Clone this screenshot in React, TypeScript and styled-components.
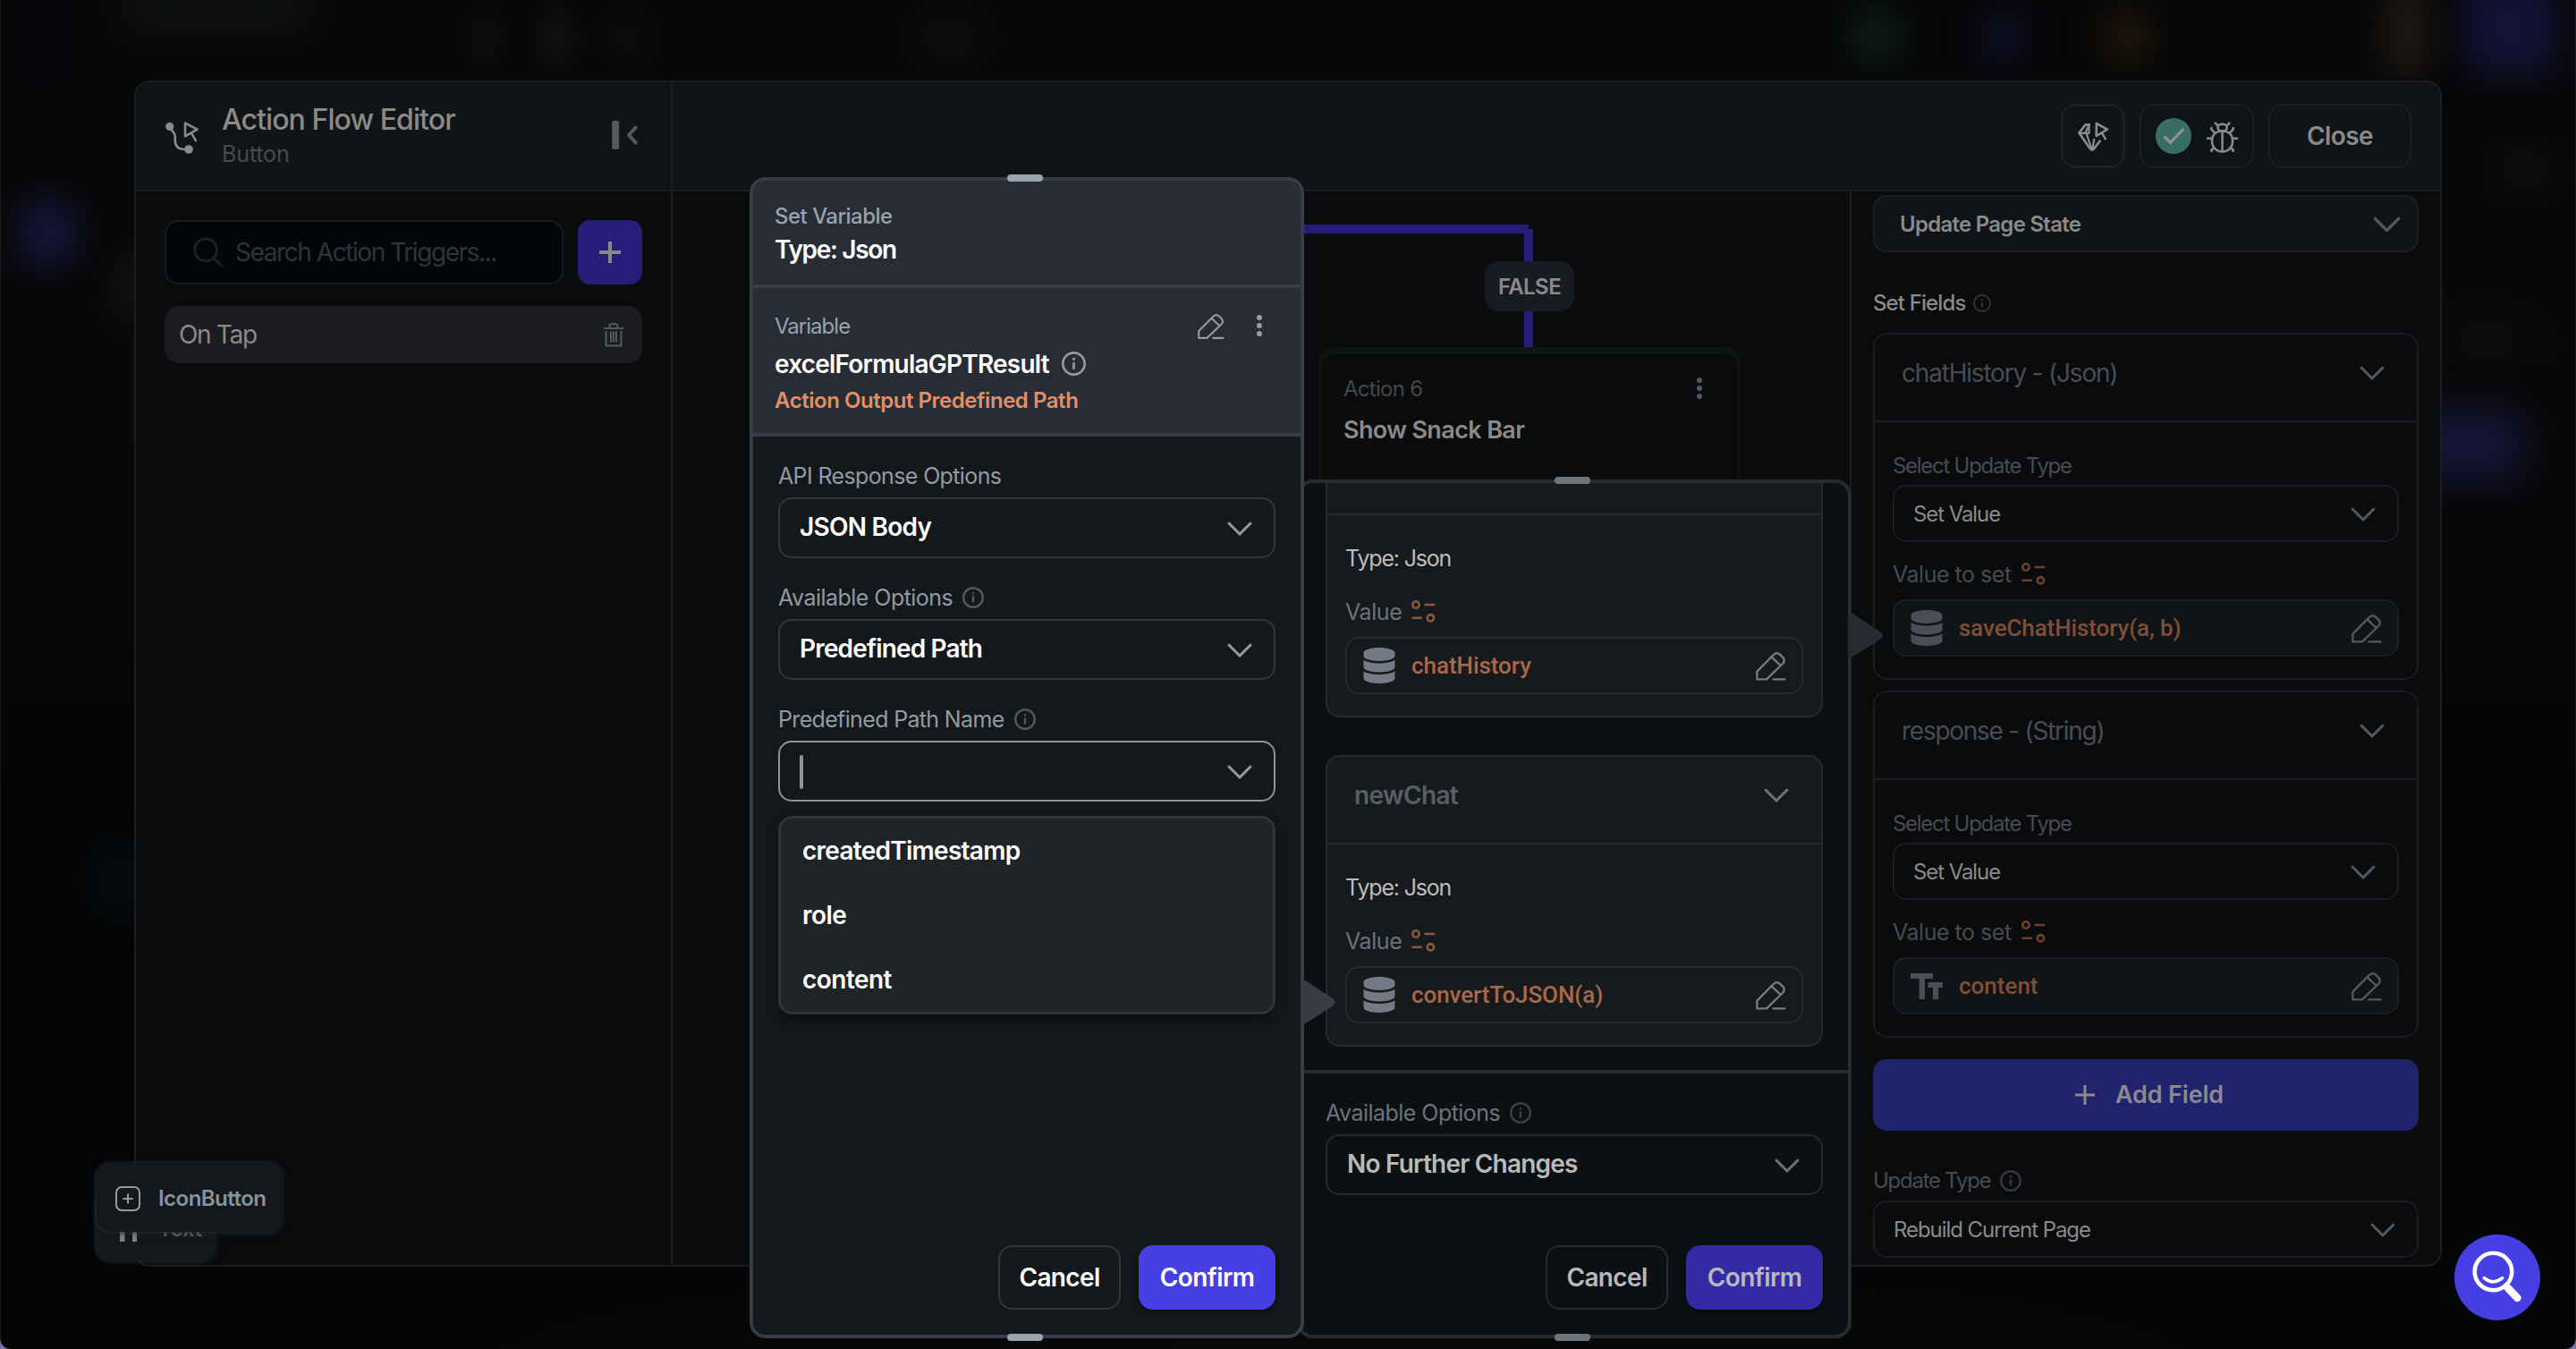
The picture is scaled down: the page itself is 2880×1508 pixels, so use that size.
import React from 'react';
import styled, { createGlobalStyle, css } from 'styled-components';
import { FaDatabase } from 'react-icons/fa';

const c = {
  line: '#1a1d22',
  shell: '#0a0b0d',
  bar: '#101416',
  dimText: '#8a8a8a',
  dimLabel: '#474c52',
  dimIcon: '#54595e',
  border1: '#373c46',
  border2: '#262a31',
  label1: '#919ba5',
  label2: '#6b737b',
};

const TIGHTEN = 0.13;

const GlobalStyle = createGlobalStyle`
  * { box-sizing: border-box; }
  body { margin: 0; background: #7d70a8; font-family: Inter, "Liberation Sans", sans-serif; }
  svg { display: block; flex: none; overflow: visible; }
`;

const Page = styled.main`
  position: relative;
  width: 2880px;
  height: 1508px;
  padding: 90px 149px 92px;
  overflow: hidden;
  border-radius: 0 0 12px 12px;
  border: solid #1b1d1d;
  border-width: 0 1px;
  background:
    radial-gradient(ellipse 60px 90px at 45px 40px, #08081499, transparent),
    radial-gradient(ellipse 34px 45px at 540px 42px, #0d0f0f, transparent),
    radial-gradient(ellipse 36px 50px at 620px 42px, #101212, transparent),
    radial-gradient(ellipse 50px 45px at 700px 42px, #0b0c0c, transparent),
    radial-gradient(ellipse 50px 60px at 150px 320px, #101111, transparent),
    radial-gradient(ellipse 70px 55px at 1060px 42px, #0c0d0d, transparent),
    radial-gradient(ellipse 60px 50px at 2822px 190px, #0c0e0e, transparent),
    radial-gradient(ellipse 90px 60px at 2780px 380px, #0b0c0d, transparent),
    radial-gradient(ellipse 1200px 110px at 1500px 1508px, #080a08, transparent),
    linear-gradient(180deg, #060707 0%, #070808 30%, #040506 62%, #040506 100%);
`;

const Glow = styled.i<{ $x: number; $y: number; $w: number; $h: number; $c: string; $b?: number }>`
  position: absolute;
  left: ${p => p.$x}px;
  top: ${p => p.$y}px;
  width: ${p => p.$w}px;
  height: ${p => p.$h}px;
  background: ${p => p.$c};
  filter: blur(${p => p.$b ?? 20}px);
`;

type TextProps = { $s: number; $w?: number; $c: string; $ls?: number; $lh?: number; $mono?: boolean };
const Text = styled.span<TextProps>`
  font-size: ${p => p.$s}px;
  font-weight: ${p => p.$w ?? 400};
  color: ${p => p.$c};
  letter-spacing: ${p => (p.$mono ? p.$ls ?? 0 : (p.$ls ?? 0) - TIGHTEN)}px;
  line-height: ${p => p.$lh ?? 32}px;
  white-space: nowrap;
  ${p => p.$mono && css`font-family: Roboto, "Liberation Sans", sans-serif;`}
`;

/* ---------- icons ---------- */
const Chevron = ({ color, w = 28 }: { color: string; w?: number }) => (
  <svg width={w} height={(w * 16) / 28} viewBox="0 0 28 16" fill="none" stroke={color} strokeWidth="3">
    <path d="M1.2 1.2 L14 14 L26.8 1.2" />
  </svg>
);
const Info = ({ color, size = 24, sw = 2.4 }: { color: string; size?: number; sw?: number }) => (
  <svg width={size} height={size} viewBox="0 0 24 24" fill="none" stroke={color} strokeWidth={sw}>
    <circle cx="12" cy="12" r="10.8" />
    <path d="M12 10.6 V17.6 M12 6.2 V8.6" />
  </svg>
);
const Pencil = ({ color, w = 34 }: { color: string; w?: number }) => (
  <svg width={w} height={(w * 32) / 34} viewBox="0 0 34 32" fill="none" stroke={color} strokeWidth="2.4" strokeLinejoin="round" strokeLinecap="round">
    <path d="M1.4 30.4 V21.6 L19.8 3 Q23.6 -0.6 27.2 2.8 L30.2 5.8 Q33.4 9.4 30 13 L12 30.4 Z" />
    <path d="M17.6 5.4 L27.8 15 M19.6 30.4 H32.4" />
  </svg>
);
const Toggle = ({ color }: { color: string }) => (
  <svg width="27" height="25" viewBox="0 0 27 25" fill="none" stroke={color} strokeWidth="2.6">
    <circle cx="5" cy="5" r="3.7" />
    <path d="M14.5 5 H26.2 M0.4 19.8 H11.8" />
    <circle cx="21.4" cy="19.8" r="3.7" />
  </svg>
);
const Dots = ({ color }: { color: string }) => (
  <svg width="6" height="24" viewBox="0 0 6 24" fill={color}>
    <circle cx="3" cy="3" r="3" /><circle cx="3" cy="12" r="3" /><circle cx="3" cy="21" r="3" />
  </svg>
);
const FlowIcon = () => (
  <svg width="37" height="37" viewBox="0 0 37 37" fill="none" stroke="#8a8a8a" strokeWidth="2.6">
    <circle cx="4.7" cy="7.4" r="4.6" fill="#8a8a8a" stroke="none" />
    <circle cx="26" cy="33" r="4.8" fill="#8a8a8a" stroke="none" />
    <path d="M6 10 C8.5 14 10.8 14.5 10.8 19 V23 Q10.8 33 22 33" />
    <path d="M22 3.6 L35.6 10.6 L22 18.4 Z M28.8 14.4 L34.4 24.2" strokeLinejoin="round" />
  </svg>
);
const CollapseIcon = () => (
  <svg width="29" height="32" viewBox="0 0 29 32" fill="none" stroke="#54585c">
    <rect x="0.2" y="-1" width="8" height="32" rx="2" fill="#54585c" stroke="none" />
    <path d="M26.6 6.6 L19 15 L26.6 23.4" strokeWidth="4" strokeLinecap="round" strokeLinejoin="round" />
  </svg>
);
const SearchIcon = () => (
  <svg width="34" height="34" viewBox="0 0 34 34" fill="none" stroke="#1c2023" strokeWidth="3" strokeLinecap="round">
    <circle cx="14" cy="14.4" r="12.4" /><path d="M23.4 24 L32 32" />
  </svg>
);
const Plus = ({ size, color, sw = 3 }: { size: number; color: string; sw?: number }) => (
  <svg width={size} height={size} viewBox="0 0 24 24" stroke={color} strokeWidth={sw}>
    <path d="M12 0 V24 M0 12 H24" />
  </svg>
);
const Trash = () => (
  <svg width="22" height="27" viewBox="0 0 22 27" fill="none" stroke="#54595e" strokeWidth="2">
    <path d="M0 6 H22 M6.6 6 V3 Q6.6 1.2 8.4 1.2 H13.6 Q15.4 1.2 15.4 3 V6" />
    <path d="M2.6 9 V25.6 H19.4 V9 M8 9.6 V21.6 M11 9.6 V21.6 M14 9.6 V21.6" />
  </svg>
);
const GemIcon = () => (
  <svg width="34" height="33" viewBox="0 0 34 33" fill="none" stroke="#8a8a8a" strokeWidth="2.6" strokeLinejoin="round">
    <path d="M14 3.4 H8.6 L1.4 12.6 L14 30.4 Q16 32.6 18 30.4 L25.4 20.8" />
    <path d="M1.4 12.8 H13.4 M12.6 3.4 V12.8 M12.6 3.4 L8.4 12.8 M9.6 13 L15.6 31 M18.4 19 L16.4 31" strokeWidth="2.2" />
    <path d="M20.8 2 L33 8.6 L20.8 15.8 Z M26.8 12.4 L31.4 20.2" />
  </svg>
);
const CheckBadge = () => (
  <svg width="40" height="40" viewBox="0 0 40 40" fill="none">
    <circle cx="20" cy="20" r="20" fill="#396e67" />
    <path d="M9.6 20.4 L16.4 27.4 L31.4 12" stroke="#8f9290" strokeWidth="3.2" />
  </svg>
);
const Bug = () => (
  <svg width="35" height="35" viewBox="0 -1 35 35" fill="none" stroke="#8a8a8a" strokeWidth="2.5">
    <ellipse cx="17.6" cy="6.6" rx="5.2" ry="3.9" />
    <path d="M17.6 10.6 C9.6 10.6 6 15.4 6 21.6 C6 28.4 11 33.6 17.6 33.6 C24.2 33.6 29.2 28.4 29.2 21.6 C29.2 15.4 25.6 10.6 17.6 10.6 Z M17.6 11 V33.6" />
    <path d="M10 0.4 V2.2 L13 4.6 M25.2 0.4 V2.2 L22.2 4.6 M0 18.8 H6 M29.2 18.8 H35.2 M5.4 6 V8.4 L9 12.4 M29.8 6 V8.4 L26.2 12.4 M5.6 34 V31.4 L8.6 29 M29.6 34 V31.4 L26.6 29" />
  </svg>
);
const TtIcon = () => (
  <svg width="36" height="29" viewBox="0 0 36 29" fill="#4a4e58">
    <path d="M0 0 H25 V6 H16 V29 H9.6 V6 H0 Z M19.6 10 H36 V16 H31.2 V29 H25 V16 H19.6 Z" />
  </svg>
);

/* ---------- shared controls ---------- */
const Select = styled.div<{ $h: number; $bc: string; $pl: number; $pr: number; $bg?: string }>`
  display: flex;
  align-items: center;
  justify-content: space-between;
  height: ${p => p.$h}px;
  padding: 1px ${p => p.$pr}px 0 ${p => p.$pl}px;
  border: 2px solid ${p => p.$bc};
  border-radius: 15px;
  background: ${p => p.$bg ?? 'transparent'};
`;
const SelectValue = styled.div`
  display: flex;
  padding-bottom: 3px;
`;
const LabelRow = styled.div<{ $gap: number; $mt?: number; $mb?: number }>`
  display: flex;
  align-items: center;
  gap: ${p => p.$gap}px;
  height: 32px;
  padding-top: 1px;
  margin: ${p => p.$mt ?? 0}px 0 ${p => p.$mb ?? 0}px;
`;
const ValueField = styled.div<{ $bc: string; $bg?: string }>`
  display: flex;
  align-items: center;
  height: 64px;
  padding: 0 17px 0 18px;
  border: 2px solid ${p => p.$bc};
  border-radius: 15px;
  background: ${p => p.$bg ?? 'transparent'};
`;
const FieldIcon = styled.div<{ $c: string }>`
  width: 36px;
  margin-right: 18px;
  color: ${p => p.$c};
  svg { width: 36px; }
`;
const FieldText = styled.div`flex: 1;`;
const FieldAction = styled.div`padding-top: 2px;`;
const Button = styled.button<{ $w: number; $bc?: string; $bg?: string }>`
  width: ${p => p.$w}px;
  height: 72px;
  padding: 0;
  display: flex;
  align-items: center;
  justify-content: center;
  border-radius: 16px;
  border: ${p => (p.$bc ? `2px solid ${p.$bc}` : 'none')};
  background: ${p => p.$bg ?? 'transparent'};
  ${p => p.$bg && css`box-shadow: 0 4px 6px rgba(0, 0, 0, 0.35);`}
  font-family: inherit;
`;
const Footer = styled.div`
  display: flex;
  justify-content: flex-end;
  gap: 20px;
  margin-top: auto;
  padding: 0 28px 28px;
`;

/* ---------- modal shell ---------- */
const Modal = styled.section`
  position: relative;
  width: 2580px;
  height: 1326px;
  display: flex;
  flex-direction: column;
  border: 2px solid ${c.line};
  border-radius: 17px;
  background: ${c.shell};
  overflow: hidden;
`;
const TopBar = styled.header`
  display: flex;
  flex: none;
  height: 122px;
  background: ${c.bar};
  border-bottom: 2px solid ${c.line};
`;
const TitleArea = styled.div`
  width: 600px;
  display: flex;
  align-items: center;
  padding: 0 37px 0 33px;
  border-right: 2px solid ${c.line};
`;
const TitleText = styled.div`
  display: flex;
  flex-direction: column;
  gap: 2px;
  padding: 0 0 2px 26px;
  flex: 1;
`;
const TopActions = styled.div`
  flex: 1;
  display: flex;
  align-items: center;
  justify-content: flex-end;
  gap: 16px;
  padding-right: 32px;
`;
const IconBox = styled.div<{ $w: number; $b: number }>`
  width: ${p => p.$w}px;
  height: 72px;
  display: flex;
  align-items: center;
  justify-content: center;
  gap: 17px;
  border: ${p => p.$b}px solid #1b1f23;
  border-radius: 16px;
`;
const Body = styled.div`
  display: flex;
  flex: 1;
  min-height: 0;
`;
const Sidebar = styled.aside`
  width: 600px;
  padding: 32px;
  border-right: 2px solid ${c.line};
`;
const SearchRow = styled.div`
  display: flex;
  gap: 16px;
  margin-bottom: 24px;
`;
const SearchBox = styled.div`
  width: 446px;
  height: 72px;
  display: flex;
  align-items: center;
  gap: 13px;
  padding: 0 0 1px 30px;
  border: 2px solid #181c1f;
  border-radius: 15px;
  background: #030608;
`;
const AddTrigger = styled.button`
  width: 72px;
  height: 72px;
  display: flex;
  align-items: center;
  justify-content: center;
  border: 0;
  border-radius: 14px;
  background: #261e78;
`;
const TriggerRow = styled.div`
  display: flex;
  align-items: center;
  justify-content: space-between;
  height: 64px;
  padding: 0 21px 0 16px;
  border-radius: 16px;
  background: #1a1c21;
`;
const Canvas = styled.div`
  position: relative;
  flex: 1;
`;
const Wire = styled.div<{ $x: number; $y: number; $w: number; $h: number }>`
  position: absolute;
  left: ${p => p.$x}px;
  top: ${p => p.$y}px;
  width: ${p => p.$w}px;
  height: ${p => p.$h}px;
  background: #261e78;
`;
const BranchChip = styled.div`
  position: absolute;
  left: 908px;
  top: 78px;
  width: 100px;
  height: 56px;
  padding-top: 2px;
  display: flex;
  align-items: center;
  justify-content: center;
  border-radius: 16px;
  background: #181b21;
`;
const Node = styled.div`
  position: absolute;
  left: 722px;
  top: 174px;
  width: 472px;
  height: 220px;
  display: flex;
  justify-content: space-between;
  padding: 23px 39px 0 24px;
  border: solid #0f1314;
  border-width: 8px 4px 4px;
  border-radius: 18px;
  background: #0a0b0d;
`;
const Stack = styled.div<{ $gap: number }>`
  display: flex;
  flex-direction: column;
  gap: ${p => p.$gap}px;
`;
const Nudge = styled.div<{ $mt: number }>`margin-top: ${p => p.$mt}px;`;

/* ---------- right settings ---------- */
const Settings = styled.aside`
  width: 660px;
  padding: 4px 24px 0 24px;
  border-left: 2px solid ${c.line};
  overflow: hidden;
`;
const FieldCard = styled.div`
  height: 388px;
  margin-bottom: 12px;
  border: 2px solid ${c.line};
  border-radius: 16px;
`;
const CardHead = styled.div<{ $bc: string; $pl: number; $pr: number }>`
  display: flex;
  align-items: center;
  justify-content: space-between;
  height: 98px;
  padding: 0 ${p => p.$pr}px 10px ${p => p.$pl}px;
  border-bottom: 2px solid ${p => p.$bc};
`;
const CardBody = styled.div<{ $pt: number }>`
  padding: ${p => p.$pt}px 20px 0;
`;
const AddField = styled.button`
  width: 100%;
  height: 80px;
  margin: 24px 0 0;
  padding: 0 0 0 8px;
  display: flex;
  align-items: center;
  justify-content: center;
  gap: 23px;
  border: 0;
  border-radius: 15px;
  background: #22236f;
  font-family: inherit;
`;

/* ---------- floating panels ---------- */
const Panel = styled.section<{ $x: number; $y: number; $h: number; $bc: string; $bg: string }>`
  position: absolute;
  left: ${p => p.$x - 1}px;
  top: ${p => p.$y}px;
  width: 620px;
  height: ${p => p.$h}px;
  display: flex;
  flex-direction: column;
  border: 4px solid ${p => p.$bc};
  border-radius: 18px;
  background: ${p => p.$bg};
`;
const Handle = styled.i<{ $edge: 'top' | 'bottom'; $c: string }>`
  position: absolute;
  left: 284px;
  ${p => p.$edge}: -7px;
  width: 40px;
  height: 8px;
  border-radius: 4px;
  background: ${p => p.$c};
`;
const Pointer = styled.div<{ $y: number }>`
  position: absolute;
  left: 612px;
  top: ${p => p.$y}px;
`;
const PointerTip = ({ y, color }: { y: number; color: string }) => (
  <Pointer $y={y}>
    <svg width="40" height="54" viewBox="0 0 40 54" fill={color}>
      <path d="M0 0 L4 2 L34 22 Q44 27 34 33 L4 52 L0 54 Z" />
    </svg>
  </Pointer>
);
const HeadBlock = styled.div<{ $h: number; $pt: number; $first?: boolean }>`
  height: ${p => p.$h}px;
  flex: none;
  display: flex;
  justify-content: space-between;
  padding: ${p => p.$pt}px 43px 0 24px;
  border-bottom: 4px solid ${c.border1};
  background: #282c34;
  ${p => p.$first && css`border-radius: 13px 13px 0 0;`}
`;
const HeadTools = styled.div`
  display: flex;
  gap: 36px;
  align-items: flex-start;
`;
const NameRow = styled.div`
  display: flex;
  align-items: center;
  gap: 14px;
  height: 40px;
`;
const FormArea = styled.div`
  padding: 0 28px;
`;
const Caret = styled.i`
  width: 4px;
  height: 38px;
  border-radius: 2px;
  background: #8b949d;
`;
const Menu = styled.div`
  display: flex;
  flex-direction: column;
  height: 222px;
  margin-top: 16px;
  padding: 0 24px;
  border: 3px solid #2f343c;
  border-radius: 16px;
  background: #1f2428;
  box-shadow: 0 6px 12px rgba(0, 0, 0, 0.4);
`;
const ScrollArea = styled.div`
  flex: none;
  height: 660px;
  padding: 0 28px;
  overflow: hidden;
  border-bottom: 4px solid ${c.border2};
  border-radius: 14px 14px 0 0;
`;
const VarCard = styled.div<{ $mt: number }>`
  height: 326px;
  margin-top: ${p => p.$mt}px;
  border: 2px solid ${c.border2};
  border-radius: 16px;
  background: #171a1c;
`;

/* ---------- drag chips and help ---------- */
const Chip = styled.div<{ $y: number; $w: number; $pt: number }>`
  position: absolute;
  left: 107px;
  top: ${p => p.$y}px;
  width: ${p => p.$w}px;
  height: 77px;
  display: flex;
  align-items: center;
  gap: 20px;
  padding: ${p => p.$pt}px 0 0 21px;
  border-radius: 16px;
  background: #14181b;
  box-shadow: -1px 0 5px #2a2e36, 2px 2px 8px rgba(32, 37, 44, 0.5);
`;
const Help = styled.button`
  position: absolute;
  left: 2743px;
  top: 1380px;
  width: 96px;
  height: 96px;
  padding: 0;
  border: 0;
  border-radius: 50%;
  background: #463fe4;
`;

const SettingField = ({ title, tls, value, vls, icon }: { title: string; tls: number; value: string; vls: number; icon: React.ReactNode }) => (
  <FieldCard>
    <CardHead $bc={c.line} $pl={30} $pr={36}>
      <Text $s={28} $c="#484d55" $ls={tls}>{title}</Text>
      <Chevron color={c.dimIcon} />
    </CardHead>
    <CardBody $pt={32}>
      <LabelRow $gap={0} $mb={6}><Text $s={24} $c={c.dimLabel} $ls={-1.15}>Select Update Type</Text></LabelRow>
      <Select $h={64} $bc={c.line} $pl={21} $pr={24}>
        <Text $s={24} $c={c.dimText} $ls={-0.95}>Set Value</Text>
        <Chevron color={c.dimIcon} />
      </Select>
      <LabelRow $gap={11} $mt={19} $mb={13}>
        <Text $s={25} $c={c.dimLabel} $ls={-0.35}>Value to set</Text>
        <Toggle color="#6b4230" />
      </LabelRow>
      <ValueField $bc={c.line} $bg={c.bar}>
        <FieldIcon $c="#4a4e58">{icon}</FieldIcon>
        <FieldText><Text $mono $s={26} $w={500} $c="#7f4e38" $ls={vls}>{value}</Text></FieldText>
        <FieldAction><Pencil color="#54595e" /></FieldAction>
      </ValueField>
    </CardBody>
  </FieldCard>
);

const PanelVar = ({ mt, name, value, vls }: { mt: number; name?: string; value: string; vls: number }) => (
  <VarCard $mt={mt}>
    <CardHead $bc={c.border2} $pl={30} $pr={36}>
      {name && <Text $s={28} $w={600} $c="#575f66" $ls={-0.5}>{name}</Text>}
      {name && <Chevron color={c.label2} />}
    </CardHead>
    <CardBody $pt={31}>
      <LabelRow $gap={0}><Text $s={25} $c="#bcbcbc" $ls={-1.05}>Type: Json</Text></LabelRow>
      <LabelRow $gap={11} $mt={28} $mb={13}>
        <Text $s={25} $c={c.label2} $ls={-0.29}>Value</Text>
        <Toggle color="#8a5640" />
      </LabelRow>
      <ValueField $bc={c.border2}>
        <FieldIcon $c="#747b86"><FaDatabase size={40} /></FieldIcon>
        <FieldText><Text $mono $s={26} $w={500} $c="#a96849" $ls={vls}>{value}</Text></FieldText>
        <FieldAction><Pencil color="#747b86" /></FieldAction>
      </ValueField>
    </CardBody>
  </VarCard>
);

export default function App() {
  return (
    <>
      <GlobalStyle />
      <Page>
        <Glow $x={22} $y={226} $w={60} $h={68} $c="#17173f" $b={20} />
        <Glow $x={130} $y={-20} $w={220} $h={56} $c="#111313" $b={26} />
        <Glow $x={112} $y={956} $w={40} $h={54} $c="#06141a" $b={22} />
        <Glow $x={2072} $y={14} $w={48} $h={54} $c="#10231d" />
        <Glow $x={2216} $y={16} $w={44} $h={52} $c="#101030" />
        <Glow $x={2353} $y={14} $w={48} $h={54} $c="#25180d" />
        <Glow $x={2664} $y={-10} $w={52} $h={92} $c="#201814" $b={18} />
        <Glow $x={2756} $y={-24} $w={100} $h={106} $c="#141338" $b={20} />
        <Glow $x={2690} $y={458} $w={130} $h={78} $c="#161538" $b={22} />
        <Modal>
          <TopBar>
            <TitleArea>
              <FlowIcon />
              <TitleText>
                <Text $s={32} $w={500} $c={c.dimText} $ls={-0.79} $lh={40}>Action Flow Editor</Text>
                <Text $s={25} $c="#474b4f" $ls={0}>Button</Text>
              </TitleText>
              <CollapseIcon />
            </TitleArea>
            <TopActions>
              <IconBox $w={72} $b={3}><GemIcon /></IconBox>
              <IconBox $w={128} $b={2}><CheckBadge /><Bug /></IconBox>
              <Button $w={160} $bc="#1b1f23"><Text $s={28} $w={600} $c={c.dimText} $ls={-0.49}>Close</Text></Button>
            </TopActions>
          </TopBar>
          <Body>
            <Sidebar>
              <SearchRow>
                <SearchBox>
                  <SearchIcon />
                  <Text $s={28} $c="#303437" $ls={-1.3}>Search Action Triggers...</Text>
                </SearchBox>
                <AddTrigger><Plus size={24} color="#8a8a8a" sw={4} /></AddTrigger>
              </SearchRow>
              <TriggerRow>
                <Text $s={28} $c={c.dimText} $ls={-1.2}>On Tap</Text>
                <Trash />
              </TriggerRow>
            </Sidebar>
            <Canvas>
              <Wire $x={500} $y={37} $w={457} $h={10} />
              <Wire $x={952} $y={42} $w={10} $h={132} />
              <BranchChip><Text $s={24} $w={600} $c={c.dimText} $ls={-0.45}>FALSE</Text></BranchChip>
              <Node>
                <Stack $gap={10}>
                  <Text $s={24} $c="#42474b" $ls={-0.6}>Action 6</Text>
                  <Text $s={27} $w={600} $c={c.dimText} $ls={-0.5} $lh={40}>Show Snack Bar</Text>
                </Stack>
                <Nudge $mt={3}><Dots color="#54595e" /></Nudge>
              </Node>
            </Canvas>
            <Settings>
              <Select $h={64} $bc="#1b1f23" $pl={28} $pr={18} $bg={c.bar}>
                <Text $s={24} $w={600} $c={c.dimText} $ls={-0.6}>Update Page State</Text>
                <Chevron color={c.dimIcon} w={31} />
              </Select>
              <LabelRow $gap={9} $mt={40} $mb={18}>
                <Text $s={24} $w={500} $c={c.dimText} $ls={-0.75}>Set Fields</Text>
                <Info color="#303538" size={20} />
              </LabelRow>
              <SettingField title="chatHistory - (Json)" tls={-1.07} value="saveChatHistory(a, b)" vls={-0.1} icon={<FaDatabase size={40} />} />
              <SettingField title="response - (String)" tls={-1.13} value="content" vls={0} icon={<TtIcon />} />
              <AddField>
                <Plus size={22} color="#8a8a8a" sw={3.4} />
                <Text $s={27} $w={600} $c={c.dimText} $ls={-0.05}>Add Field</Text>
              </AddField>
              <LabelRow $gap={10} $mt={39} $mb={7}>
                <Text $s={24} $c={c.dimLabel} $ls={-1.12}>Update Type</Text>
                <Info color="#34393d" size={24} />
              </LabelRow>
              <Select $h={64} $bc={c.line} $pl={21} $pr={24}>
                <Text $s={24} $c={c.dimText} $ls={-0.93}>Rebuild Current Page</Text>
                <Chevron color={c.dimIcon} />
              </Select>
            </Settings>
          </Body>
        </Modal>

        <Panel $x={1450} $y={536} $h={960} $bc={c.border2} $bg="#0c1012">
          <ScrollArea>
            <PanelVar mt={-64} value="chatHistory" vls={-0.05} />
            <PanelVar mt={42} name="newChat" value="convertToJSON(a)" vls={-0.08} />
          </ScrollArea>
          <FormArea>
            <LabelRow $gap={11} $mt={27} $mb={9}>
              <Text $s={25} $c={c.label2} $ls={-0.4}>Available Options</Text>
              <Info color="#3a4046" />
            </LabelRow>
            <Select $h={68} $bc={c.border2} $pl={22} $pr={24}>
              <SelectValue><Text $s={28} $w={600} $c="#b9b9b9" $ls={-0.66}>No Further Changes</Text></SelectValue>
              <Chevron color={c.label2} />
            </Select>
          </FormArea>
          <Footer>
            <Button $w={137} $bc={c.border2}><Text $s={28} $w={600} $c="#b9b9b9" $ls={-0.51}>Cancel</Text></Button>
            <Button $w={153} $bg="#332ba5"><Text $s={28} $w={600} $c="#b9b9b9" $ls={-0.47}>Confirm</Text></Button>
          </Footer>
          <Handle $edge="top" $c="#6d757c" />
          <Handle $edge="bottom" $c="#6d757c" />
          <PointerTip y={143} color={c.border2} />
        </Panel>

        <Panel $x={838} $y={198} $h={1298} $bc={c.border1} $bg="#14181b">
          <HeadBlock $h={120} $pt={24} $first>
            <Stack $gap={1}>
              <Text $s={24} $w={500} $c="#98a2b0" $ls={-0.38}>Set Variable</Text>
              <Text $s={28} $w={600} $c="#ffffff" $ls={-1.2} $lh={40}>Type: Json</Text>
            </Stack>
          </HeadBlock>
          <HeadBlock $h={166} $pt={27}>
            <Stack $gap={5.5}>
              <Text $s={24} $c="#98a2b0" $ls={-0.85}>Variable</Text>
              <NameRow>
                <Text $s={28} $w={600} $c="#ffffff" $ls={-0.66} $lh={40}>excelFormulaGPTResult</Text>
                <Info color="#919ba5" size={27} />
              </NameRow>
              <Text $s={24} $w={600} $c="#e28f66" $ls={-0.33}>Action Output Predefined Path</Text>
            </Stack>
            <HeadTools>
              <Nudge $mt={2}><Pencil color="#919ba5" w={30} /></Nudge>
              <Nudge $mt={3}><Dots color="#919ba5" /></Nudge>
            </HeadTools>
          </HeadBlock>
          <FormArea>
            <LabelRow $gap={0} $mt={27} $mb={9}><Text $s={25} $c={c.label1} $ls={-0.5}>API Response Options</Text></LabelRow>
            <Select $h={68} $bc="#31363f" $pl={22} $pr={24}>
              <SelectValue><Text $s={28} $w={600} $c="#ffffff" $ls={-0.62}>JSON Body</Text></SelectValue>
              <Chevron color={c.label1} />
            </Select>
            <LabelRow $gap={11} $mt={27} $mb={9}>
              <Text $s={25} $c={c.label1} $ls={-0.4}>Available Options</Text>
              <Info color="#505860" />
            </LabelRow>
            <Select $h={68} $bc="#31363f" $pl={22} $pr={24}>
              <SelectValue><Text $s={28} $w={600} $c="#ffffff" $ls={-0.71}>Predefined Path</Text></SelectValue>
              <Chevron color={c.label1} />
            </Select>
            <LabelRow $gap={11} $mt={27} $mb={9}>
              <Text $s={25} $c={c.label1} $ls={-0.53}>Predefined Path Name</Text>
              <Info color="#505860" />
            </LabelRow>
            <Select $h={68} $bc="#8b949d" $pl={22} $pr={24}>
              <Caret />
              <Chevron color={c.label1} />
            </Select>
            <Menu>
              <Text $s={28} $w={600} $c="#ffffff" $ls={-0.6} $lh={72}>createdTimestamp</Text>
              <Text $s={28} $w={600} $c="#ffffff" $ls={-0.4} $lh={72}>role</Text>
              <Text $s={28} $w={600} $c="#ffffff" $ls={-0.4} $lh={72}>content</Text>
            </Menu>
          </FormArea>
          <Footer>
            <Button $w={137} $bc="#31363f"><Text $s={28} $w={600} $c="#ffffff" $ls={-0.51}>Cancel</Text></Button>
            <Button $w={153} $bg="#463fe4"><Text $s={28} $w={600} $c="#ffffff" $ls={-0.47}>Confirm</Text></Button>
          </Footer>
          <Handle $edge="top" $c="#9aa4ae" />
          <Handle $edge="bottom" $c="#9aa4ae" />
          <PointerTip y={891} color={c.border1} />
        </Panel>

        <Chip $y={1332} $w={132} $pt={6}>
          <svg width="28" height="28" viewBox="0 2 28 28" fill="#7b858e">
            <path d="M1 6 H27 V11 H24 V30 H19 V11 H10.5 V30 H5 V11 H1 Z" />
          </svg>
          <Text $s={24} $w={500} $c="#656e77">Text</Text>
        </Chip>
        <Chip $y={1300} $w={207} $pt={2}>
          <svg width="28" height="28" viewBox="0 0 28 28" fill="none" stroke="#919ba5" strokeWidth="2">
            <rect x="1" y="1" width="26" height="26" rx="6" />
            <path d="M14 8.4 V19.6 M8.4 14 H19.6" />
          </svg>
          <Text $s={24} $w={600} $c="#88929c" $ls={-0.4}>IconButton</Text>
        </Chip>

        <Help>
          <svg width="96" height="96" viewBox="0 0 96 96" fill="none" stroke="#fff" strokeLinecap="round">
            <circle cx="43.5" cy="41.5" r="20.8" strokeWidth="4.6" />
            <path d="M60 60 L70.5 71" strokeWidth="8.4" />
            <path d="M33.4 48.6 Q43.5 57 53.6 48.6" strokeWidth="3.6" />
          </svg>
        </Help>
      </Page>
    </>
  );
}
